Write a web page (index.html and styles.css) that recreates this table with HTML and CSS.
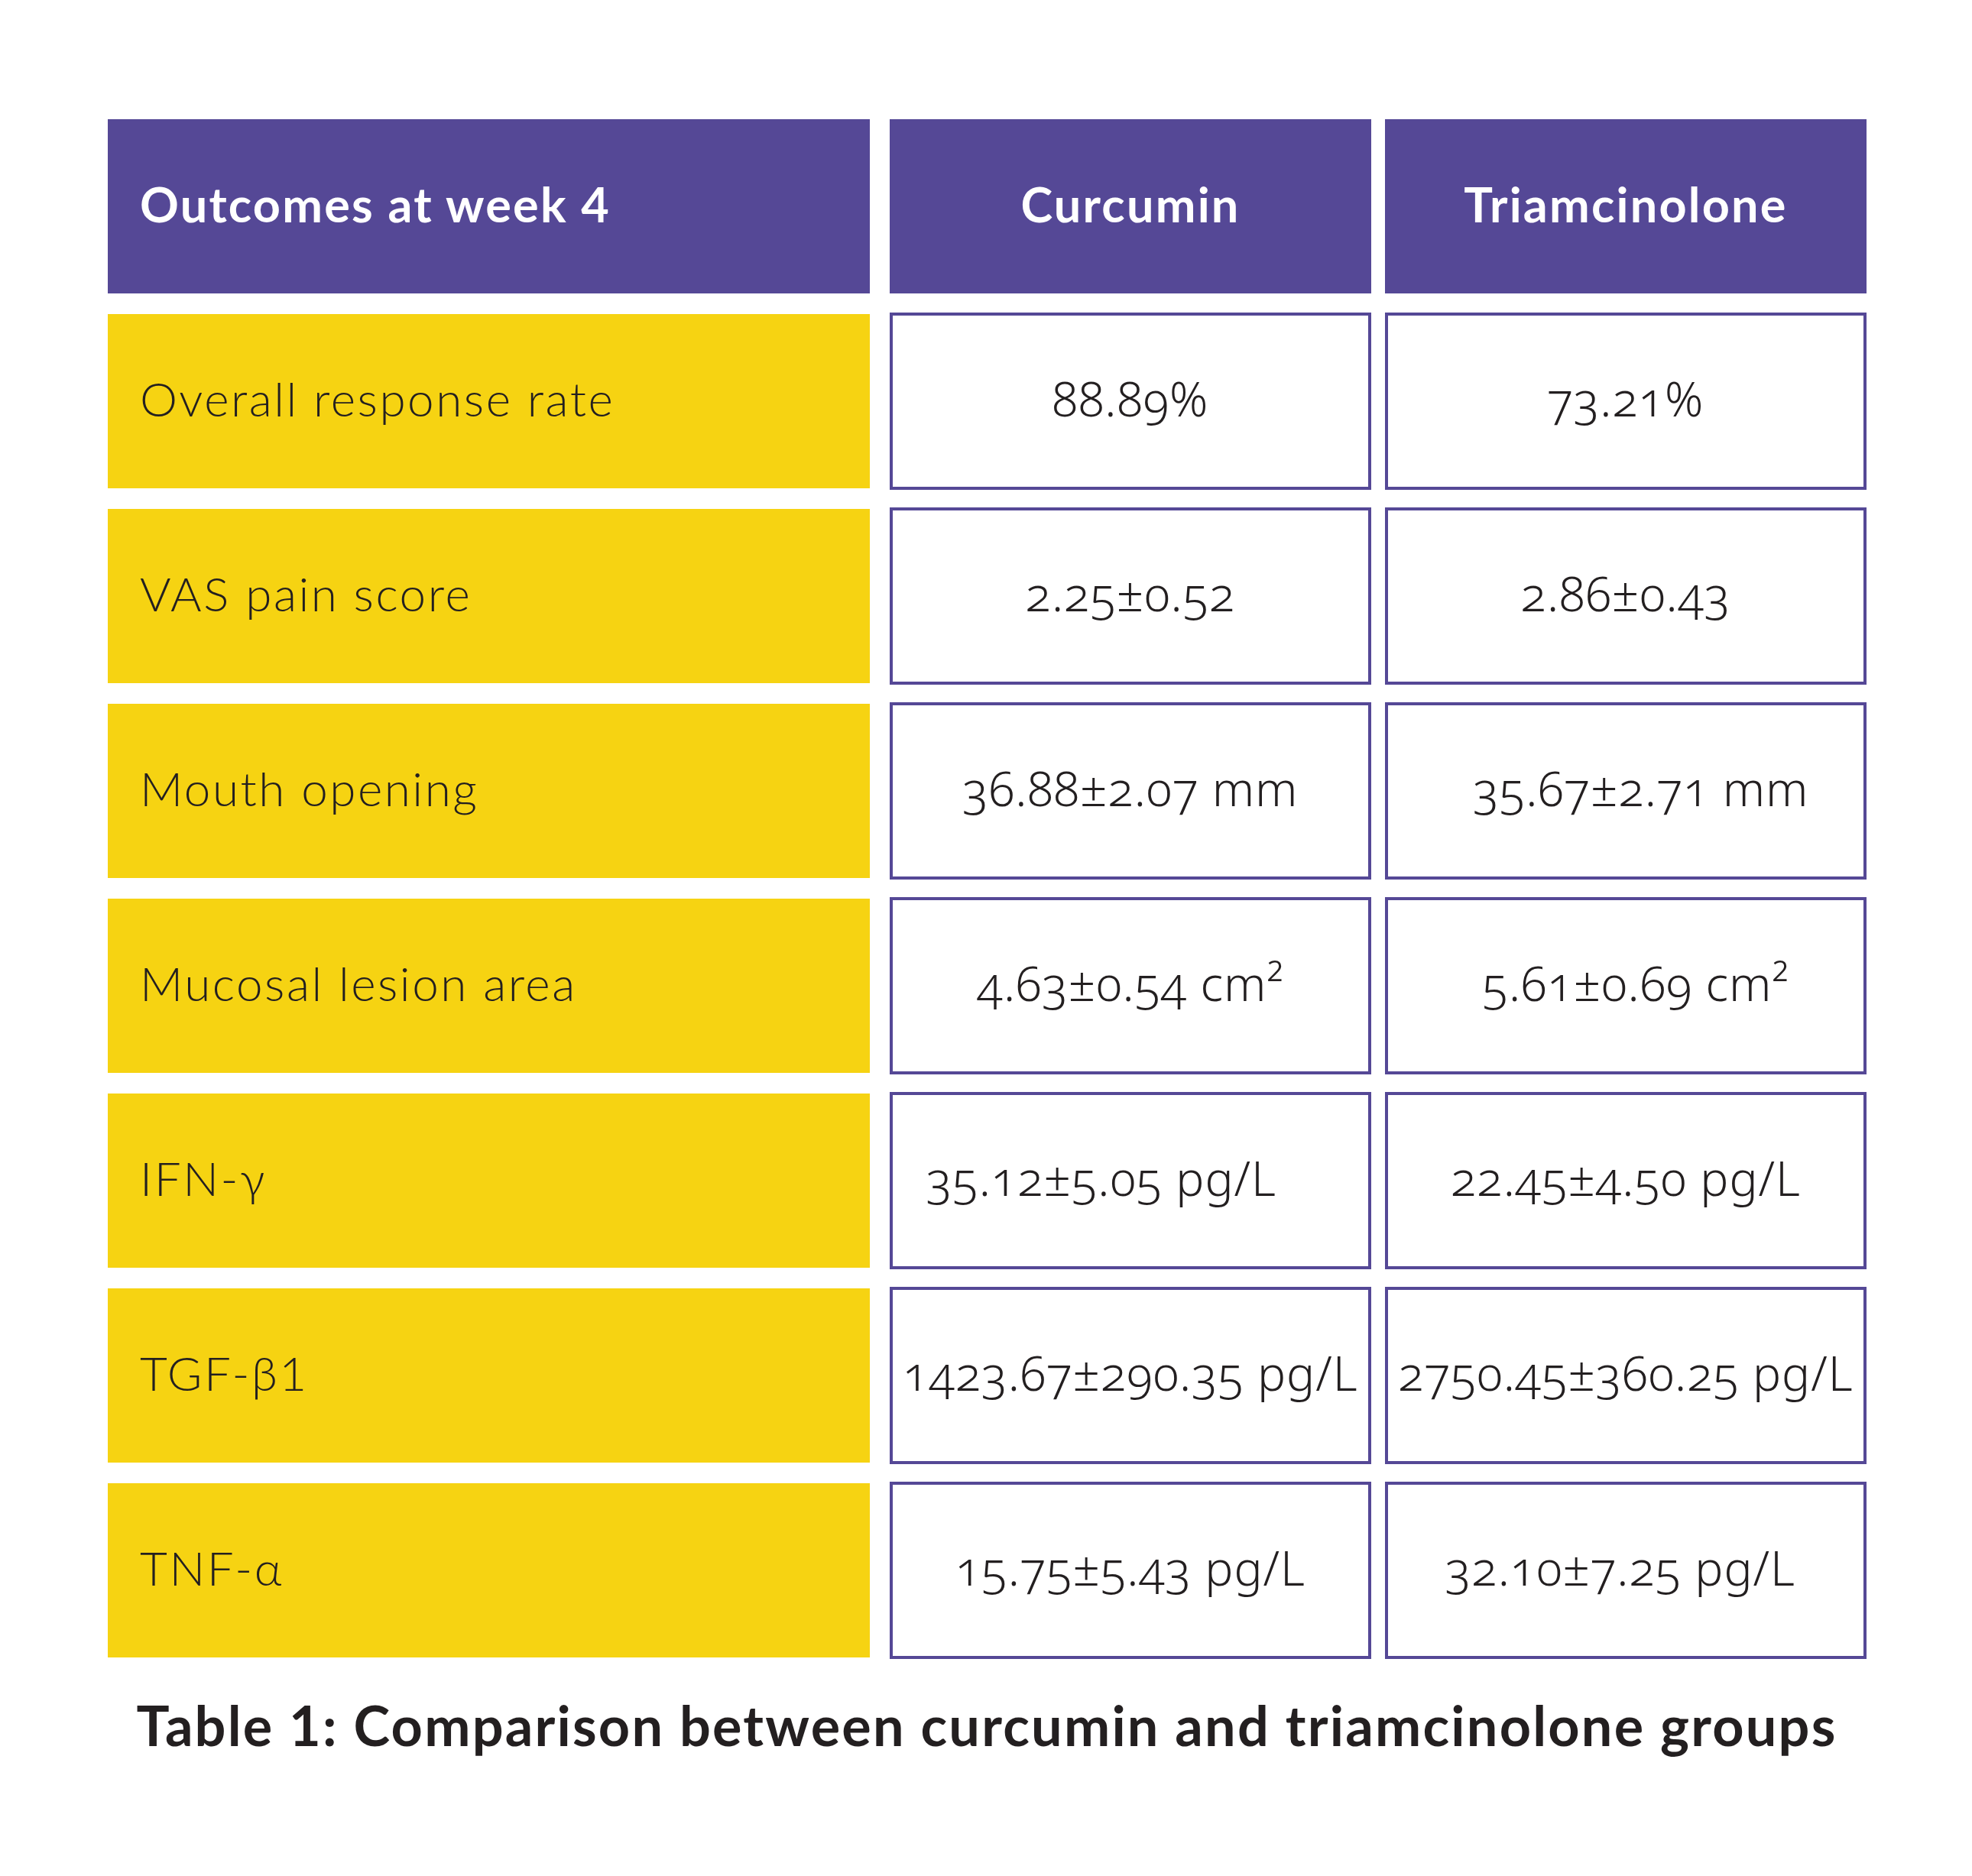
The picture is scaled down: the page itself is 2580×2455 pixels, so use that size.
FILE: index.html
```html
<!DOCTYPE html>
<html lang="en">
<head>
<meta charset="utf-8">
<title>Table 1: Comparison between curcumin and triamcinolone groups</title>
<link rel="stylesheet" href="styles.css">
</head>
<body>
<main class="page">
  <section class="table-wrap">
    <div class="grid">
      <div class="head head-label">Outcomes at week 4</div>
      <div class="head">Curcumin</div>
      <div class="head">Triamcinolone</div>

      <div class="label">Overall response rate</div>
      <div class="value">88.89%</div>
      <div class="value">73.21%</div>

      <div class="label">VAS pain score</div>
      <div class="value">2.25±0.52</div>
      <div class="value">2.86±0.43</div>

      <div class="label">Mouth opening</div>
      <div class="value">36.88±2.07 mm</div>
      <div class="value shift-r20">35.67±2.71 mm</div>

      <div class="label">Mucosal lesion area</div>
      <div class="value">4.63±0.54 cm²</div>
      <div class="value shift-r13">5.61±0.69 cm²</div>

      <div class="label">IFN-γ</div>
      <div class="value shift-l38">35.12±5.05 pg/L</div>
      <div class="value">22.45±4.50 pg/L</div>

      <div class="label">TGF-β1</div>
      <div class="value">1423.67±290.35 pg/L</div>
      <div class="value">2750.45±360.25 pg/L</div>

      <div class="label">TNF-α</div>
      <div class="value">15.75±5.43 pg/L</div>
      <div class="value shift-l7">32.10±7.25 pg/L</div>
    </div>
    <p class="caption">Table 1: Comparison between curcumin and triamcinolone groups</p>
  </section>
</main>
</body>
</html>
```

FILE: styles.css
```css
html, body {
  margin: 0;
  padding: 0;
  background: #ffffff;
}

.page {
  width: 2580px;
  min-height: 2455px;
  padding: 156px 0 0 141px;
  box-sizing: border-box;
  font-family: Lato, "Open Sans", "Liberation Sans", sans-serif;
  color: #231f20;
}

.table-wrap {
  width: 2300px;
}

.grid {
  display: grid;
  grid-template-columns: 1005px 630px 630px;
  grid-auto-rows: 228px;
  column-gap: 18px;
  row-gap: 27px;
}

.head {
  background: #554896;
  color: #ffffff;
  font-weight: 700;
  font-size: 63px;
  letter-spacing: 2.2px;
  padding-bottom: 8px;
  box-sizing: border-box;
  display: flex;
  align-items: center;
  justify-content: center;
}

.head-label {
  justify-content: flex-start;
  padding-left: 42px;
  margin-right: 8px;
}

.label {
  background: #f6d312;
  margin-right: 8px;
  padding: 0 0 8px 42px;
  box-sizing: border-box;
  display: flex;
  align-items: center;
  font-size: 62px;
  font-weight: 300;
  letter-spacing: 2.5px;
}

.value {
  margin: -2px 0;
  border: 4px solid #554896;
  background: #ffffff;
  padding-bottom: 8px;
  box-sizing: border-box;
  display: flex;
  align-items: center;
  justify-content: center;
  font-family: "Noto Sans", "Open Sans", sans-serif;
  font-size: 62px;
  font-weight: 300;
  letter-spacing: 1px;
  font-variant-numeric: oldstyle-nums;
  font-feature-settings: "onum" 1;
  white-space: nowrap;
}

.shift-r20 { padding-left: 40px; }
.shift-r13 { padding-left: 26px; }
.shift-l38 { padding-right: 76px; }
.shift-l7 { padding-right: 14px; }

.caption {
  margin: 45px 0 0;
  text-align: center;
  font-size: 72px;
  font-weight: 700;
  letter-spacing: 2.2px;
  line-height: 1.2;
}
```
